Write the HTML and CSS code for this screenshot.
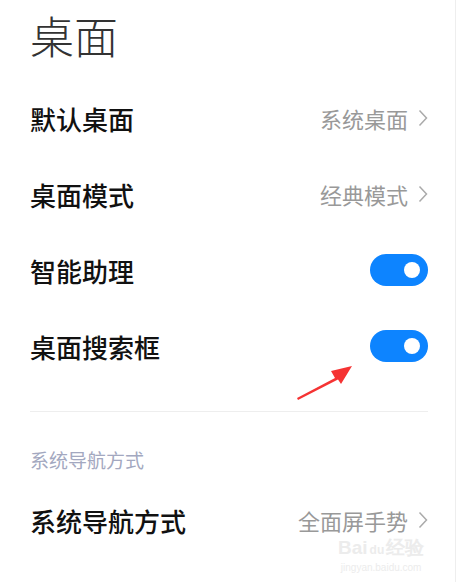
FILE: index.html
```html
<!DOCTYPE html>
<html>
<head>
  <meta charset="utf-8">
  <title>桌面</title>
  <link rel="stylesheet" href="styles.css">
</head>
<body>
  <div id="page">
    <h1 class="title">桌面</h1>
    <div class="row">
      <span class="label">默认桌面</span>
      <span class="value">系统桌面<svg class="chevron" viewBox="0 0 10 18"><path d="M1.5 1.5 L8.5 9 L1.5 16.5"/></svg></span>
    </div>
    <div class="row">
      <span class="label">桌面模式</span>
      <span class="value">经典模式<svg class="chevron" viewBox="0 0 10 18"><path d="M1.5 1.5 L8.5 9 L1.5 16.5"/></svg></span>
    </div>
    <div class="row">
      <span class="label">智能助理</span>
      <span class="switch on"><span class="knob"></span></span>
    </div>
    <div class="row">
      <span class="label">桌面搜索框</span>
      <span class="switch on"><span class="knob"></span></span>
    </div>
    <div class="divider"></div>
    <div class="section">系统导航方式</div>
    <div class="row">
      <span class="label">系统导航方式</span>
      <span class="value">全面屏手势<svg class="chevron" viewBox="0 0 10 18"><path d="M1.5 1.5 L8.5 9 L1.5 16.5"/></svg></span>
    </div>

    <!-- 标注箭头 -->
    <svg class="arrow" viewBox="0 0 60 36">
      <path d="M1 33 L39 13 L35 6 L56 1 L45 19 L42 14.5 L2 35 Z"/>
    </svg>

    <div class="watermark">
      <div class="wm-logo">Bai<span class="wm-du">du</span>经验</div>
      <div class="wm-url">jingyan.baidu.com</div>
    </div>
  </div>
</body>
</html>
```
FILE: styles.css
```css
body {
    margin: 0;
    padding: 0;
    background-color: #fff;
    font-family: "Noto Sans CJK SC", "Noto Sans", sans-serif;
}
#page {
    position: relative;
    width: 456px;
    height: 582px;
    padding: 0 27px 0 30px;
    box-sizing: border-box;
    overflow: hidden;
    border-right: 1px solid #eee;
}
.title {
    margin: 0;
    height: 80px;
    font-size: 44px;
    font-weight: 300;
    line-height: 70px;
    color: #333;
}
.row {
    display: flex;
    align-items: center;
    justify-content: space-between;
    height: 76px;
}
.label {
    font-size: 26px;
    font-weight: 500;
    color: #111;
}
.value {
    display: flex;
    align-items: center;
    font-size: 22px;
    color: #999;
}
.chevron {
    width: 10px;
    height: 18px;
    margin-left: 10px;
    fill: none;
    stroke: #aaa;
    stroke-width: 1.5;
}
.switch {
    position: relative;
    width: 58px;
    height: 32px;
    border-radius: 16px;
    background-color: #0d84ff;
}
.knob {
    position: absolute;
    top: 8px;
    right: 8px;
    width: 16px;
    height: 16px;
    border-radius: 50%;
    background-color: #fff;
}
.divider {
    height: 1px;
    margin-top: 27px;
    background-color: #eee;
}
.section {
    height: 44px;
    margin-top: 26px;
    line-height: 44px;
    font-size: 19px;
    color: #a3a8c0;
}
.arrow {
    position: absolute;
    left: 296px;
    top: 365px;
    width: 60px;
    height: 36px;
    fill: #f53333;
}
.watermark {
    position: absolute;
    left: 338px;
    top: 538px;
    color: #ececec;
    text-align: center;
}
.wm-logo {
    font-family: "Liberation Sans", sans-serif;
    font-size: 19px;
    font-weight: bold;
    line-height: 20px;
}
.wm-du {
    font-size: 12px;
    padding: 0 2px;
}
.wm-url {
    font-family: "Liberation Sans", sans-serif;
    font-size: 10px;
    line-height: 16px;
}
```
